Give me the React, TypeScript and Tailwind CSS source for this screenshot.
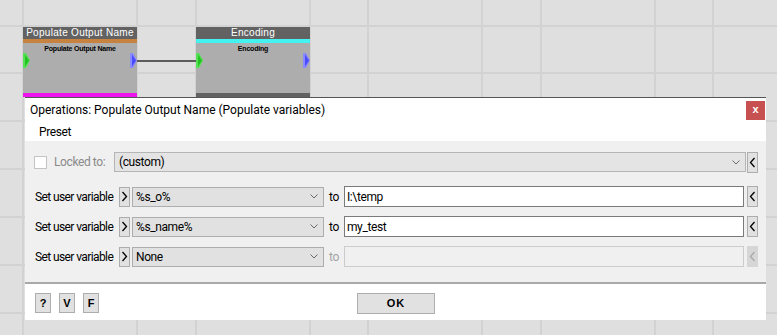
import React from "react";

const vLines = [23, 137, 196, 310, 368, 482, 541, 655, 713];
const hLines = [26, 73, 121, 169, 217, 265, 313];

function Port({ fill, dark }: { fill: string; dark: string }) {
  return (
    <svg width="7" height="15" viewBox="0 0 7 15" className="block">
      <polygon points="0,0 3,0 7,7.5 3,15 0,15" fill={fill} />
      <polygon points="2,1.5 6,7.5 2,13.5" fill={dark} />
    </svg>
  );
}

function Node({
  pos,
  title,
  bar,
  bottom,
}: {
  pos: string;
  title: string;
  bar: string;
  bottom: string;
}) {
  return (
    <div className={`absolute top-[27px] w-[114px] flex flex-col ${pos}`}>
      <div className="h-[12px] bg-[#626262] text-white text-[10px] leading-[12px] text-center font-['Liberation_Sans',sans-serif] tracking-[0.3px] whitespace-nowrap">
        {title}
      </div>
      <div className={`h-[4px] ${bar}`} />
      <div className="relative h-[50px] bg-[#adadad]">
        <div className="text-[7px] leading-[9px] pt-[1px] font-bold tracking-[-0.2px] text-center text-black font-['Liberation_Sans',sans-serif] whitespace-nowrap">
          {title}
        </div>
        <div className="absolute left-0 top-[10px]">
          <Port fill="#55e055" dark="#22c322" />
        </div>
        <div className="absolute right-0 top-[10px]">
          <Port fill="#8a8aff" dark="#4a4aff" />
        </div>
      </div>
      <div className={`h-[4px] ${bottom}`} />
    </div>
  );
}

function ChevronDown() {
  return (
    <svg width="8" height="5" viewBox="0 0 8 5" className="block">
      <polyline points="0.5,0.5 4,4 7.5,0.5" fill="none" stroke="#6a6a6a" strokeWidth="1" />
    </svg>
  );
}

function LeftBtn({ disabled }: { disabled?: boolean }) {
  return (
    <div
      className={`ml-[3px] w-[11px] h-[21px] border flex items-center justify-center ${
        disabled ? "bg-[#d6d6d6] border-[#d6d6d6]" : "bg-[#e1e1e1] border-[#adadad]"
      }`}
    >
      <svg width="7" height="11" viewBox="0 0 7 11" className="block">
        <polyline
          points="5.5,1 1.5,5.5 5.5,10"
          fill="none"
          stroke={disabled ? "#a8a8a8" : "#000"}
          strokeWidth="1.3"
        />
      </svg>
    </div>
  );
}

function VarRow({ name, value, disabled }: { name: string; value: string; disabled?: boolean }) {
  return (
    <div className="flex items-center h-[21px]">
      <div className="w-[85px] pl-[1px] whitespace-nowrap tracking-[-0.6px]">Set user variable</div>
      <div className="w-[11px] h-[20px] bg-[#e1e1e1] border border-[#adadad] flex items-center justify-center">
        <svg width="7" height="11" viewBox="0 0 7 11" className="block">
          <polyline points="1.5,1 5.5,5.5 1.5,10" fill="none" stroke="#000" strokeWidth="1.3" />
        </svg>
      </div>
      <div className="ml-[2px] w-[192px] h-[20px] bg-[#e1e1e1] border border-[#adadad] flex items-center justify-between pl-[3px] pr-[5px]">
        <span className="whitespace-nowrap">{name}</span>
        <ChevronDown />
      </div>
      <div className={`w-[20px] pl-[5px] ${disabled ? "text-[#a3a3a3]" : "text-black"}`}>to</div>
      <div
        className={`w-[400px] h-[21px] border flex items-center pl-[2px] ${
          disabled ? "bg-[#f0f0f0] border-[#cccccc]" : "bg-white border-[#7a7a7a]"
        }`}
      >
        <span className="whitespace-nowrap">{value}</span>
      </div>
      <LeftBtn disabled={disabled} />
    </div>
  );
}

export default function App() {
  return (
    <div className="relative w-[777px] h-[335px] overflow-hidden bg-[#dfdfdf] font-['Roboto',sans-serif] text-[12px] tracking-[-0.4px] text-black">
      {vLines.map((x) => (
        <div
          key={`v${x}`}
          className="absolute top-0 h-[335px] w-[2px] bg-[#d2d2d2]"
          style={{ left: x - 1 }}
        />
      ))}
      {hLines.map((y) => (
        <div
          key={`h${y}`}
          className="absolute left-0 w-[777px] h-[2px] bg-[#d2d2d2]"
          style={{ top: y - 1 }}
        />
      ))}

      <div className="absolute left-[137px] top-[60px] w-[59px] h-[2px] bg-[#5c5c5c]" />

      <Node pos="left-[23px]" title="Populate Output Name" bar="bg-[#c8823f]" bottom="bg-[#ee14ee]" />
      <Node pos="left-[196px]" title="Encoding" bar="bg-[#45f2f2]" bottom="bg-[#626262]" />

      <div className="absolute left-[25px] top-[97px] w-[741px] h-[223px] bg-white border-t border-[#555555] flex flex-col">
        <div className="h-[24px] flex items-center justify-between pl-[5px] pr-[1px]">
          <span className="whitespace-nowrap tracking-[0px]">Operations: Populate Output Name (Populate variables)</span>
          <div className="w-[19px] h-[19px] bg-[#c75050] text-white text-[11px] font-bold leading-[17px] text-center font-['Liberation_Sans',sans-serif] tracking-normal">
            x
          </div>
        </div>
        <div className="h-[19px] flex items-center pl-[14px]">Preset</div>

        <div className="h-[141px] bg-[#f0f0f0] pt-[11px] pl-[9px] flex flex-col">
          <div className="flex items-center h-[20px]">
            <div className="w-[13px] h-[13px] bg-white border border-[#c4c4c4]" />
            <div className="ml-[7px] w-[60px] text-[#8a8a8a] whitespace-nowrap">Locked to:</div>
            <div className="w-[632px] h-[20px] bg-[#e4e4e4] border border-[#b5b5b5] flex items-center justify-between pl-[4px] pr-[5px]">
              <span>(custom)</span>
              <ChevronDown />
            </div>
            <div className="ml-[1px] w-[11px] h-[21px] bg-[#e1e1e1] border border-[#adadad] flex items-center justify-center">
              <svg width="7" height="11" viewBox="0 0 7 11" className="block">
                <polyline points="5.5,1 1.5,5.5 5.5,10" fill="none" stroke="#000" strokeWidth="1.3" />
              </svg>
            </div>
          </div>
          <div className="h-[14px]" />
          <VarRow name="%s_o%" value="I:\temp" />
          <div className="h-[9px]" />
          <VarRow name="%s_name%" value="my_test" />
          <div className="h-[9px]" />
          <VarRow name="None" value="" disabled />
        </div>

        <div className="h-[2px] bg-[#a9a9a9]" />

        <div className="h-[36px] flex items-start pt-[9px] pl-[10px] font-['Liberation_Sans',sans-serif] tracking-normal">
          <div className="flex gap-[8px]">
            {["?", "V", "F"].map((t) => (
              <div
                key={t}
                className="w-[16px] h-[20px] bg-[#e1e1e1] border border-[#adadad] text-[11px] font-bold leading-[18px] text-center"
              >
                {t}
              </div>
            ))}
          </div>
          <div className="ml-[258px] w-[78px] h-[21px] bg-[#e1e1e1] border border-[#adadad] text-[11px] font-bold leading-[19px] text-center tracking-[1px]">
            OK
          </div>
        </div>
      </div>
    </div>
  );
}
